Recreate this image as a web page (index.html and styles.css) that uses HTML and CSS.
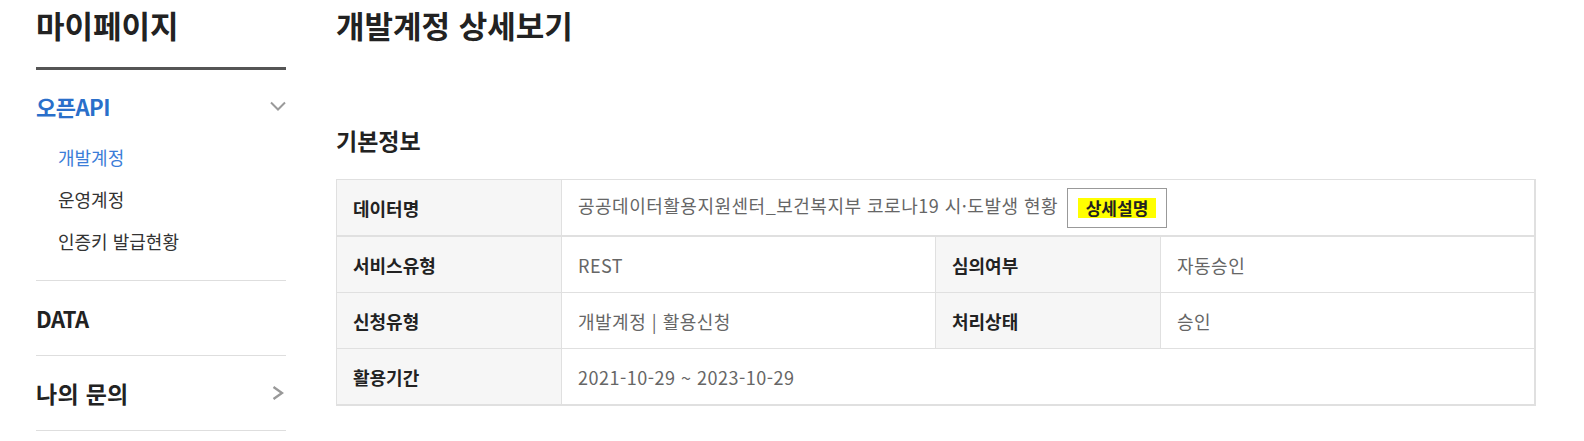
FILE: index.html
```html
<!DOCTYPE html>
<html lang="ko">
<head>
<meta charset="utf-8">
<title>개발계정 상세보기</title>
<link rel="stylesheet" href="styles.css">
</head>
<body>
<div class="page">
  <aside class="lnb">
    <h2 class="lnb-title">마이페이지</h2>
    <ul class="lnb-menu">
      <li class="menu is-open">
        <a class="menu-head is-active" href="#">
          <span>오픈API</span>
          <svg class="chev-down" width="16" height="10" viewBox="0 0 16 10" aria-hidden="true"><polyline points="1,1.5 8,8.5 15,1.5" fill="none" stroke="#9a9a9a" stroke-width="2"/></svg>
        </a>
        <ul class="sub">
          <li class="sub-item is-on"><a href="#">개발계정</a></li>
          <li class="sub-item"><a href="#">운영계정</a></li>
          <li class="sub-item"><a href="#">인증키 발급현황</a></li>
        </ul>
      </li>
      <li class="menu">
        <a class="menu-head" href="#"><span class="latin">DATA</span></a>
      </li>
      <li class="menu">
        <a class="menu-head" href="#">
          <span class="wide">나의 문의</span>
          <svg class="chev-right" width="12" height="14" viewBox="0 0 12 14" aria-hidden="true"><polyline points="1.5,1 10,7 1.5,13" fill="none" stroke="#999" stroke-width="2.4"/></svg>
        </a>
      </li>
    </ul>
  </aside>

  <main class="content">
    <h1 class="page-title">개발계정 상세보기</h1>
    <h3 class="section-title">기본정보</h3>
    <table class="info-table">
      <colgroup>
        <col class="c-th1"><col class="c-td1"><col class="c-th2"><col class="c-td2">
      </colgroup>
      <tbody>
        <tr class="first-row">
          <th>데이터명</th>
          <td colspan="3">공공데이터활용지원센터_보건복지부 코로나19 시·도발생 현황 <button class="btn-detail" type="button"><span class="hl">상세설명</span></button></td>
        </tr>
        <tr>
          <th>서비스유형</th>
          <td>REST</td>
          <th>심의여부</th>
          <td class="last">자동승인</td>
        </tr>
        <tr>
          <th>신청유형</th>
          <td>개발계정 | 활용신청</td>
          <th>처리상태</th>
          <td class="last">승인</td>
        </tr>
        <tr>
          <th>활용기간</th>
          <td colspan="3" class="last">2021-10-29 ~ 2023-10-29</td>
        </tr>
      </tbody>
    </table>
  </main>
</div>
</body>
</html>
```
FILE: styles.css
```css
* { box-sizing: border-box; }

html, body {
  margin: 0;
  padding: 0;
  background: #fff;
}

body {
  font-family: "Noto Sans CJK KR", "Noto Sans", sans-serif;
  color: #222;
}

a { color: inherit; text-decoration: none; }
ul { list-style: none; margin: 0; padding: 0; }

.page {
  display: flex;
  align-items: flex-start;
  padding-left: 36px;
  gap: 50px;
}

/* ---------- left nav ---------- */
.lnb {
  width: 250px;
  flex: none;
}

.lnb-title {
  margin: 0;
  padding: 5px 0 22px;
  font-size: 31px;
  line-height: 40px;
  font-weight: 700;
  color: #222;
  border-bottom: 3px solid #555;
}

.menu {
  border-bottom: 1px solid #dedede;
  padding: 22px 0 22px;
}

.menu.is-open {
  padding: 21px 0 18px;
}

.menu-head {
  display: flex;
  align-items: center;
  justify-content: space-between;
  font-size: 22px;
  line-height: 30px;
  font-weight: 700;
  letter-spacing: -0.5px;
  color: #222;
}

.menu-head .wide {
  font-size: 23px;
  letter-spacing: 0.3px;
}

.menu-head.is-active { color: #2a6fca; }

.chev-right { margin-right: 2px; }

.sub {
  padding: 15px 0 0 22px;
}

.sub-item {
  font-size: 18px;
  line-height: 42px;
  color: #333;
}

.sub-item.is-on { color: #3b7dd8; }

/* ---------- content ---------- */
.content {
  flex: none;
  width: 1200px;
}

.page-title {
  margin: 0;
  padding-top: 5px;
  font-size: 31px;
  line-height: 40px;
  font-weight: 700;
  color: #222;
}

.section-title {
  margin: 80px 0 0;
  height: 54px;
  font-size: 23px;
  line-height: 30px;
  font-weight: 700;
  color: #222;
}

.info-table {
  width: 1200px;
  table-layout: fixed;
  border-collapse: separate;
  border-spacing: 0;
  border-top: 1px solid #e0e0e0;
  border-left: 1px solid #e0e0e0;
  border-right: 2px solid #e0e0e0;
  border-bottom: 1px solid #e0e0e0;
}

.c-th1 { width: 225px; }
.c-td1 { width: 374px; }
.c-th2 { width: 225px; }
.c-td2 { width: 373px; }

.info-table th,
.info-table td {
  height: 56px;
  padding: 0 16px;
  border-bottom: 1px solid #e0e0e0;
  border-right: 1px solid #e0e0e0;
  text-align: left;
  vertical-align: middle;
  font-size: 18px;
  line-height: 24px;
}

.info-table td.last { border-right: 0; }
.info-table .first-row td { border-right: 0; }

.info-table th {
  background: #f6f6f6;
  font-weight: 700;
  color: #222;
}

.info-table td {
  font-weight: 400;
  color: #666;
  letter-spacing: 0.5px;
}

.info-table .first-row th,
.info-table .first-row td {
  height: 57px;
  border-bottom-width: 2px;
}

.btn-detail {
  margin-left: 3px;
  padding: 9px 10px;
  border: 1px solid #999;
  background: #fff;
  font-family: inherit;
  letter-spacing: 0;
  vertical-align: middle;
  cursor: pointer;
}

.btn-detail .hl {
  display: block;
  padding: 0 8px;
  background: #ffff00;
  font-size: 17px;
  line-height: 20px;
  font-weight: 700;
  color: #222;
}
```
